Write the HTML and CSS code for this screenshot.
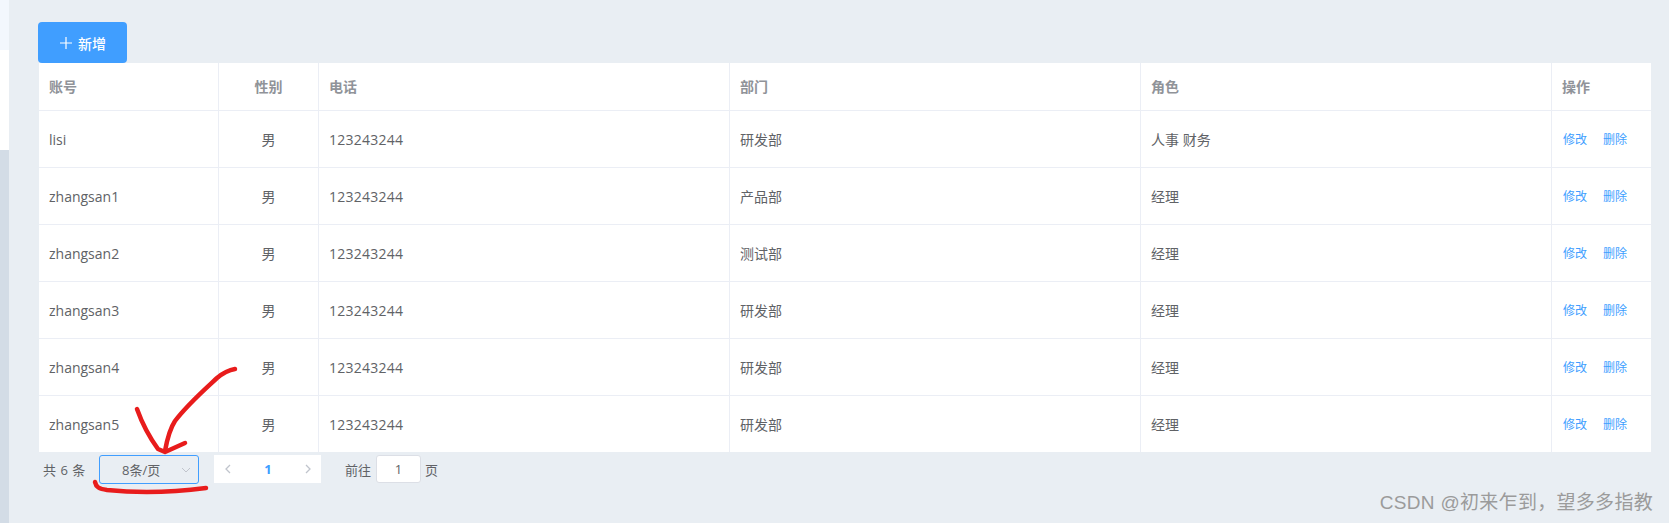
FILE: index.html
```html
<!DOCTYPE html>
<html lang="en">
<head>
    <meta charset="UTF-8">
    <meta name="viewport" content="width=device-width, initial-scale=1.0">
    <title>用户列表</title>
    <link rel="stylesheet" href="styles.css">
</head>
<body>
    <div class="layout">
        <aside class="aside">
            <div class="aside-top"></div>
            <div class="aside-white"></div>
            <div class="aside-rest"></div>
        </aside>
        <main class="main">
            <button class="btn-add">
                <svg class="btn-plus" viewBox="0 0 12 12" width="12" height="12"><path d="M6 0v12M0 6h12" stroke="#fff" stroke-width="1.2" fill="none"/></svg>
                <span>新增</span>
            </button>
            <table class="user-table">
                <colgroup>
                    <col class="col-account">
                    <col class="col-gender">
                    <col class="col-wide">
                    <col class="col-wide">
                    <col class="col-wide">
                    <col class="col-ops">
                </colgroup>
                <thead>
                    <tr>
                        <th>账号</th>
                        <th class="center">性别</th>
                        <th>电话</th>
                        <th>部门</th>
                        <th>角色</th>
                        <th>操作</th>
                    </tr>
                </thead>
                <tbody>
                    <tr>
                        <td>lisi</td><td class="center">男</td><td class="phone">123243244</td><td>研发部</td><td>人事 财务</td>
                        <td class="ops"><a class="link">修改</a><a class="link">删除</a></td>
                    </tr>
                    <tr>
                        <td>zhangsan1</td><td class="center">男</td><td class="phone">123243244</td><td>产品部</td><td>经理</td>
                        <td class="ops"><a class="link">修改</a><a class="link">删除</a></td>
                    </tr>
                    <tr>
                        <td>zhangsan2</td><td class="center">男</td><td class="phone">123243244</td><td>测试部</td><td>经理</td>
                        <td class="ops"><a class="link">修改</a><a class="link">删除</a></td>
                    </tr>
                    <tr>
                        <td>zhangsan3</td><td class="center">男</td><td class="phone">123243244</td><td>研发部</td><td>经理</td>
                        <td class="ops"><a class="link">修改</a><a class="link">删除</a></td>
                    </tr>
                    <tr>
                        <td>zhangsan4</td><td class="center">男</td><td class="phone">123243244</td><td>研发部</td><td>经理</td>
                        <td class="ops"><a class="link">修改</a><a class="link">删除</a></td>
                    </tr>
                    <tr>
                        <td>zhangsan5</td><td class="center">男</td><td class="phone">123243244</td><td>研发部</td><td>经理</td>
                        <td class="ops"><a class="link">修改</a><a class="link">删除</a></td>
                    </tr>
                </tbody>
            </table>
            <div class="pagination">
                <span class="total">共 6 条</span>
                <div class="size-select">
                    <span>8条/页</span>
                    <svg class="select-arrow" viewBox="0 0 10 6" width="10" height="6"><path d="M1 1l4 4 4-4" stroke="#c0c4cc" stroke-width="1" fill="none"/></svg>
                </div>
                <div class="pager">
                    <svg viewBox="0 0 6 10" width="6" height="10"><path d="M5 1L1 5l4 4" stroke="#c0c4cc" stroke-width="1.3" fill="none"/></svg>
                    <span class="page-num">1</span>
                    <svg viewBox="0 0 6 10" width="6" height="10"><path d="M1 1l4 4-4 4" stroke="#c0c4cc" stroke-width="1.3" fill="none"/></svg>
                </div>
                <span class="jump-label">前往</span>
                <div class="jump-input">1</div>
                <span class="jump-unit">页</span>
            </div>
        </main>
    </div>

    <!-- hand drawn red marks and the site watermark sit on top of the page -->
    <svg class="marks" width="1669" height="523" viewBox="0 0 1669 523">
        <g fill="none" stroke="#e81c1c" stroke-linecap="round" stroke-linejoin="round">
            <path d="M235 369c-6 1-12 4-18 9-14 13-30 27-42 43-6 9-8 19-10 30" stroke-width="4.5"/>
            <path d="M137 409c5 14 13 29 21 40l7 3 20-9" stroke-width="4.5"/>
            <path d="M95 482c1 5 4 7 12 8 30 3 68 2 99-2" stroke-width="4.5"/>
        </g>
    </svg>
    <div class="watermark">CSDN @初来乍到，望多多指教</div>
</body>
</html>
```

FILE: styles.css
```css
* {
    box-sizing: border-box;
}
html, body {
    margin: 0;
    height: 523px;
    overflow: hidden;
}
body {
    font-family: "Open Sans", "Noto Sans CJK SC", sans-serif;
    font-size: 14px;
    color: #606266;
    background: #e9eef3;
}
.layout {
    display: flex;
    height: 523px;
}
.aside {
    width: 10px;
    display: flex;
    flex-direction: column;
    border-right: 1px solid #e9eef3;
}
.aside-top {
    height: 50px;
    background: #f3f7fd;
}
.aside-white {
    height: 100px;
    background: #fff;
}
.aside-rest {
    flex: 1;
    background: #d3dce6;
}
.main {
    flex: 1;
    padding: 22px 18px 0 28px;
}
.btn-add {
    display: flex;
    align-items: center;
    gap: 6px;
    width: 89px;
    height: 41px;
    padding: 0 0 0 22px;
    border: 0;
    border-radius: 4px;
    background: #409eff;
    color: #fff;
    font-family: inherit;
    font-size: 14px;
    font-weight: 500;
}
.user-table {
    width: 1612px;
    margin-left: 1px;
    table-layout: fixed;
    border-collapse: separate;
    border-spacing: 0;
    background: #fff;
}
.col-account { width: 180px; }
.col-gender { width: 100px; }
.col-wide { width: 411px; }
.col-ops { width: 99px; }
.user-table th,
.user-table td {
    padding: 0 10px;
    text-align: left;
    border-right: 1px solid #ebeef5;
    border-bottom: 1px solid #ebeef5;
}
.user-table th:last-child,
.user-table td:last-child {
    border-right: 0;
}
.user-table tbody tr:last-child td {
    height: 56px;
    border-bottom: 0;
}
.user-table th {
    height: 48px;
    padding-bottom: 2px;
    color: #909399;
    font-weight: 700;
}
.user-table td {
    height: 57px;
}
.user-table th.center,
.user-table td.center {
    text-align: center;
}
.user-table td.phone {
    letter-spacing: 0.25px;
}
.user-table td.ops {
    padding-left: 11px;
    padding-right: 0;
    white-space: nowrap;
    padding-bottom: 2px;
}
.link {
    margin-right: 16px;
    color: #409eff;
    font-size: 12px;
}
.pagination {
    display: flex;
    align-items: center;
    height: 34px;
    margin-left: 5px;
    font-size: 13px;
}
.total {
    width: 56px;
    word-spacing: 1px;
}
.size-select {
    display: flex;
    align-items: center;
    justify-content: space-between;
    width: 100px;
    height: 29px;
    margin-top: 1px;
    padding: 0 7px 0 22px;
    border: 1px solid #409eff;
    border-radius: 3px;
}
.pager {
    display: flex;
    align-items: center;
    justify-content: space-between;
    width: 107px;
    height: 28px;
    margin-left: 15px;
    padding: 0 10px 0 11px;
    background: #fff;
}
.page-num {
    color: #409eff;
    font-weight: 700;
}
.jump-label {
    margin-left: 24px;
}
.jump-input {
    width: 45px;
    height: 28px;
    margin-left: 5px;
    border: 1px solid #dcdfe6;
    border-radius: 3px;
    background: #fff;
    text-align: center;
    line-height: 26px;
}
.jump-unit {
    margin-left: 4px;
}
.marks {
    position: absolute;
    top: 0;
    left: 0;
    pointer-events: none;
}
.watermark {
    position: absolute;
    right: 16px;
    top: 490px;
    color: #9b9b9b;
    font-family: "Liberation Sans", "Noto Sans CJK SC", sans-serif;
    font-size: 19px;
    letter-spacing: 0.3px;
    line-height: 26px;
    white-space: nowrap;
}
```
